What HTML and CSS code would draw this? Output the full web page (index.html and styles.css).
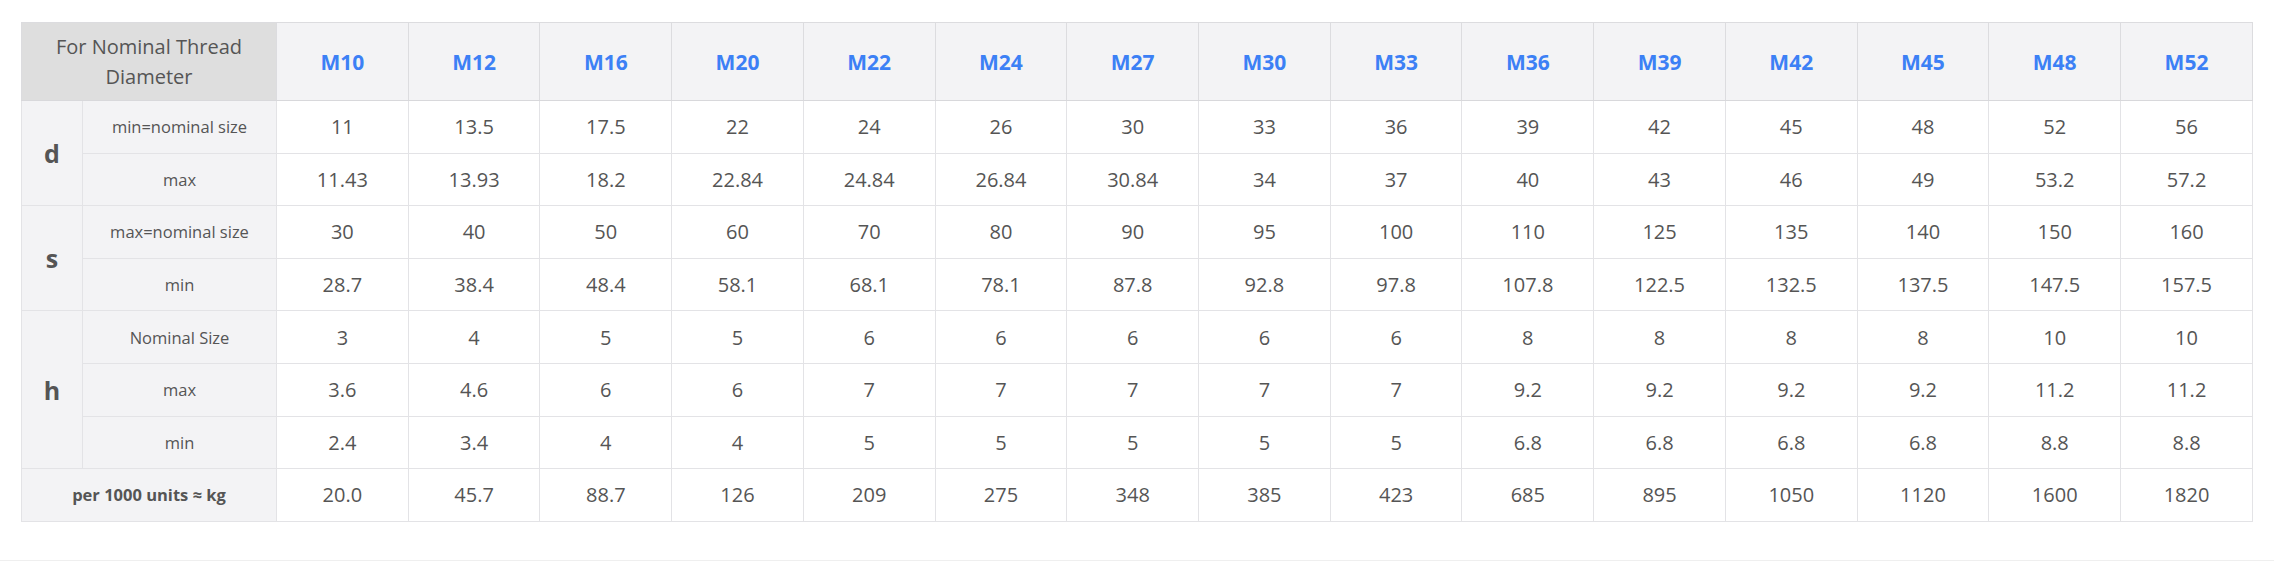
FILE: index.html
```html
<!DOCTYPE html>
<html lang="en">
<head>
<meta charset="utf-8">
<title>Hex Nut Dimensions</title>
<link rel="stylesheet" href="styles.css">
</head>
<body>
<div class="wrap">
<table class="spec">
  <colgroup>
    <col class="c-sym"><col class="c-lab">
    <col><col><col><col><col><col><col><col><col><col><col><col><col><col><col>
  </colgroup>
  <thead>
    <tr>
      <th colspan="2" class="corner">For Nominal Thread Diameter</th>
      <th>M10</th><th>M12</th><th>M16</th><th>M20</th><th>M22</th><th>M24</th><th>M27</th><th>M30</th><th>M33</th><th>M36</th><th>M39</th><th>M42</th><th>M45</th><th>M48</th><th>M52</th>
    </tr>
  </thead>
  <tbody>
    <tr>
      <td rowspan="2" class="sym">d</td><td class="lab">min=nominal size</td>
      <td>11</td><td>13.5</td><td>17.5</td><td>22</td><td>24</td><td>26</td><td>30</td><td>33</td><td>36</td><td>39</td><td>42</td><td>45</td><td>48</td><td>52</td><td>56</td>
    </tr>
    <tr>
      <td class="lab">max</td>
      <td>11.43</td><td>13.93</td><td>18.2</td><td>22.84</td><td>24.84</td><td>26.84</td><td>30.84</td><td>34</td><td>37</td><td>40</td><td>43</td><td>46</td><td>49</td><td>53.2</td><td>57.2</td>
    </tr>
    <tr>
      <td rowspan="2" class="sym">s</td><td class="lab">max=nominal size</td>
      <td>30</td><td>40</td><td>50</td><td>60</td><td>70</td><td>80</td><td>90</td><td>95</td><td>100</td><td>110</td><td>125</td><td>135</td><td>140</td><td>150</td><td>160</td>
    </tr>
    <tr>
      <td class="lab">min</td>
      <td>28.7</td><td>38.4</td><td>48.4</td><td>58.1</td><td>68.1</td><td>78.1</td><td>87.8</td><td>92.8</td><td>97.8</td><td>107.8</td><td>122.5</td><td>132.5</td><td>137.5</td><td>147.5</td><td>157.5</td>
    </tr>
    <tr>
      <td rowspan="3" class="sym">h</td><td class="lab">Nominal Size</td>
      <td>3</td><td>4</td><td>5</td><td>5</td><td>6</td><td>6</td><td>6</td><td>6</td><td>6</td><td>8</td><td>8</td><td>8</td><td>8</td><td>10</td><td>10</td>
    </tr>
    <tr>
      <td class="lab">max</td>
      <td>3.6</td><td>4.6</td><td>6</td><td>6</td><td>7</td><td>7</td><td>7</td><td>7</td><td>7</td><td>9.2</td><td>9.2</td><td>9.2</td><td>9.2</td><td>11.2</td><td>11.2</td>
    </tr>
    <tr>
      <td class="lab">min</td>
      <td>2.4</td><td>3.4</td><td>4</td><td>4</td><td>5</td><td>5</td><td>5</td><td>5</td><td>5</td><td>6.8</td><td>6.8</td><td>6.8</td><td>6.8</td><td>8.8</td><td>8.8</td>
    </tr>
    <tr>
      <td colspan="2" class="lab weight">per 1000 units ≈ kg</td>
      <td>20.0</td><td>45.7</td><td>88.7</td><td>126</td><td>209</td><td>275</td><td>348</td><td>385</td><td>423</td><td>685</td><td>895</td><td>1050</td><td>1120</td><td>1600</td><td>1820</td>
    </tr>
  </tbody>
</table>
</div>
</body>
</html>
```

FILE: styles.css
```css
html, body {
  margin: 0;
  padding: 0;
  background: #ffffff;
}

body {
  font-family: "Open Sans", "Noto Sans", sans-serif;
  color: #555555;
}

.wrap {
  padding: 22px 21px 38px;
  border-bottom: 1px solid #efefef;
}

.spec {
  width: 100%;
  table-layout: fixed;
  border-collapse: collapse;
  border: 1px solid #dcdcdf;
}

.c-sym { width: 61px; }
.c-lab { width: 194px; }

.spec th,
.spec td {
  border: 1px solid #e3e3e6;
  text-align: center;
  vertical-align: middle;
  padding: 0 6px;
}

.spec thead th {
  height: 77px;
  background: #f3f3f5;
  color: #3c80f5;
  font-size: 21px;
  font-weight: 700;
  border-color: #dcdcdf;
  border-bottom: 1px solid #d8d8db;
}

.spec thead th.corner {
  background: #dedede;
  color: #555555;
  font-size: 20px;
  font-weight: 400;
  line-height: 30px;
  padding: 0 30px;
}

.spec tbody td {
  height: 51.6px;
  font-size: 20px;
  color: #555555;
  background: #ffffff;
}

.spec tbody td.lab {
  background: #f3f3f5;
  font-size: 16.5px;
}

.spec tbody td.sym {
  background: #f3f3f5;
  font-size: 25px;
  font-weight: 700;
}

.spec tbody td.weight {
  font-weight: 700;
}
```
